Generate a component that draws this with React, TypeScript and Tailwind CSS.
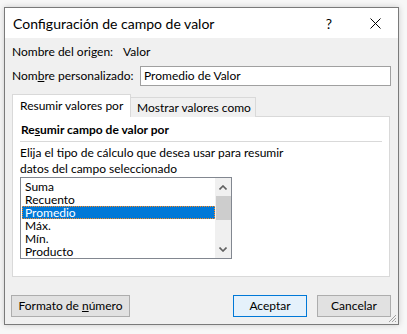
const items = ["Suma", "Recuento", "Promedio", "Máx.", "Mín.", "Producto"];

const ListBox = () => (
  <div className="ml-[7px] w-[212px] h-[82px] border border-[#828790] bg-white flex">
    <div className="flex-1 pt-[2px] pl-[1px]">
      {items.map((it) => (
        <div
          key={it}
          className={
            it === "Promedio"
              ? "h-[13px] leading-[13px] pl-[3px] bg-[#0078d7] text-white outline outline-1 outline-dotted outline-[#ff8a1f] -outline-offset-1"
              : "h-[13px] leading-[13px] pl-[3px]"
          }
        >
          {it}
        </div>
      ))}
    </div>
    <div className="w-[16px] bg-[#f0f0f0] flex flex-col items-center">
      <div className="h-[18px] flex items-center justify-center">
        <svg width="8" height="5" viewBox="0 0 8 5">
          <path d="M0.5 4.5 L4 1 L7.5 4.5" stroke="#606060" strokeWidth="1.6" fill="none" />
        </svg>
      </div>
      <div className="w-[15px] h-[24px] bg-[#cdcdcd]" />
      <div className="flex-1" />
      <div className="h-[18px] flex items-center justify-center">
        <svg width="8" height="5" viewBox="0 0 8 5">
          <path d="M0.5 0.5 L4 4 L7.5 0.5" stroke="#606060" strokeWidth="1.6" fill="none" />
        </svg>
      </div>
    </div>
  </div>
);

export default function App() {
  return (
    <div
      className="w-[407px] h-[334px] bg-[#f7f7f7] pt-[7px] pl-[4px] text-[12px] text-black whitespace-nowrap"
      style={{ fontFamily: 'Lato, "Noto Sans", sans-serif' }}
    >
      <div className="relative w-[395px] h-[318px] border border-[#7a7a7a] bg-[#f0f0f0] shadow-[0_0_6px_rgba(0,0,0,0.18)] flex flex-col">
        <div className="h-[30px] bg-white flex items-center pl-[8px] pt-[1px] shrink-0">
          <span className="text-[14px] leading-[20px]">Configuración de campo de valor</span>
          <span className="ml-auto text-[14px] leading-[20px] mr-[38px]">?</span>
          <svg width="11" height="11" viewBox="0 0 11 11" className="mr-[17px]">
            <path d="M0.5 0.5 L10.5 10.5 M10.5 0.5 L0.5 10.5" stroke="#000" strokeWidth="1" />
          </svg>
        </div>

        <div className="pl-[7px] pr-[7px] flex flex-col">
          <div className="mt-[6px] h-[16px] leading-[16px] flex">
            <span>Nombre del origen:</span>
            <span className="ml-[10px]">Valor</span>
          </div>

          <div className="mt-[6px] h-[20px] flex items-center">
            <span className="w-[128px]">
              Nom<span className="underline">b</span>re personalizado:
            </span>
            <div className="w-[251px] h-[20px] border border-[#a0a0a0] bg-white pl-[3px] leading-[18px]">
              Promedio de Valor
            </div>
          </div>

          <div className="mt-[8px] flex items-end relative z-10 -mb-px">
            <div className="w-[119px] h-[23px] border border-[#d9d9d9] border-b-0 bg-white pl-[7px] leading-[22px]">
              Resumir valores por
            </div>
            <div className="w-[125px] h-[20px] border border-[#d9d9d9] border-l-0 border-b-0 bg-[#f0f0f0] pl-[6px] leading-[19px]">
              Mostrar valores como
            </div>
          </div>

          <div className="w-[378px] h-[161px] border border-[#d9d9d9] bg-white flex flex-col">
            <div className="mt-[5px] ml-[8px] h-[16px] leading-[16px] font-bold">
              Re<span className="underline">s</span>umir campo de valor por
            </div>
            <div className="mt-[3px] ml-[7px] mr-[7px] h-px bg-[#d9d9d9]" />
            <div className="mt-[3px] ml-[7px] leading-[16px]">
              Elija el tipo de cálculo que desea usar para resumir
              <br />
              datos del campo seleccionado
            </div>
            <ListBox />
          </div>

          <div className="mt-[18px] flex">
            <button className="ml-[-1px] w-[119px] h-[22px] border border-[#adadad] bg-[#e1e1e1] leading-[20px]">
              Formato de <span className="underline">n</span>úmero
            </button>
            <button className="ml-auto w-[74px] h-[22px] border border-[#0078d7] bg-[#e5f1fb] leading-[20px]">
              Aceptar
            </button>
            <button className="ml-[10px] w-[74px] h-[22px] border border-[#adadad] bg-[#e1e1e1] leading-[20px]">
              Cancelar
            </button>
          </div>
        </div>

        <svg width="10" height="10" viewBox="0 0 10 10" className="absolute right-[1px] bottom-[1px]">
          <path d="M9 2 L2 9 M9 5 L5 9 M9 8 L8 9" stroke="#a0a0a0" strokeWidth="1" />
        </svg>
      </div>
    </div>
  );
}
